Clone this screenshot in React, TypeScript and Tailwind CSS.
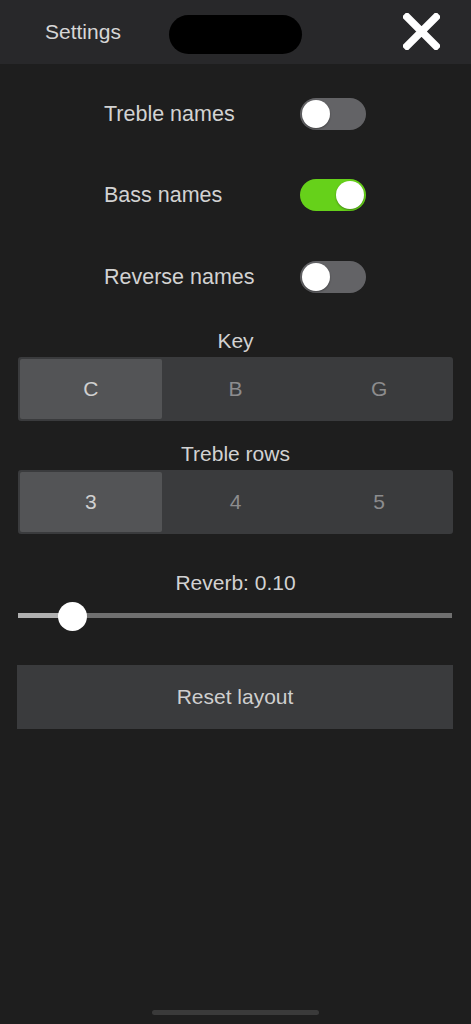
import React from "react";

function Toggle({ on }: { on: boolean }) {
  return (
    <div
      className={`flex h-[32px] w-[66px] items-center rounded-full px-[2px] ${
        on ? "justify-end bg-[#66d11a]" : "justify-start bg-[#636366]"
      }`}
    >
      <div className="h-[28px] w-[28px] rounded-full bg-white shadow-[0_1px_2px_rgba(0,0,0,0.35)]" />
    </div>
  );
}

function Row({ label, on }: { label: string; on: boolean }) {
  return (
    <div className="flex h-[81.5px] items-center pl-[104px]">
      <div className="w-[196px] text-[21.5px] text-[#d2d2d2]">{label}</div>
      <Toggle on={on} />
    </div>
  );
}

function Segmented({ title, items }: { title: string; items: string[] }) {
  return (
    <div className="flex flex-col">
      <div className="h-[24px] text-center text-[21px] leading-[24px] text-[#d2d2d2]">{title}</div>
      <div className="ml-[18px] mr-[18px] mt-[4px] grid h-[64px] grid-cols-3 rounded-[3px] bg-[#3a3b3d] p-[2px]">
        {items.map((it, i) => (
          <div
            key={it}
            className={`flex items-center justify-center rounded-[2px] text-[21px] ${
              i === 0 ? "mr-[2px] bg-[#535456] text-[#d0d0d0]" : "text-[#8c8c8e]"
            }`}
          >
            {it}
          </div>
        ))}
      </div>
    </div>
  );
}

export default function App() {
  return (
    <div
      className="relative flex min-h-[1024px] w-[471px] flex-col bg-[#1e1e1e]"
      style={{ fontFamily: '"Liberation Sans", Arial, sans-serif' }}
    >
      <div className="relative flex h-[64px] items-center justify-between bg-[#28282a] pl-[45px] pr-[31px]">
        <span className="text-[21px] text-[#d6d6d6]">Settings</span>
        <div className="absolute left-[169px] top-[15px] h-[39px] w-[133px] rounded-full bg-black" />
        <svg width="37" height="37" viewBox="0 0 37 37" className="mt-[-2px]">
          <path d="M4 4 L33 33 M33 4 L4 33" stroke="#ffffff" strokeWidth="7.5" strokeLinecap="square" />
        </svg>
      </div>

      <div className="pt-[9px]">
        <Row label="Treble names" on={false} />
        <Row label="Bass names" on={true} />
        <Row label="Reverse names" on={false} />
      </div>

      <div className="mt-[11px]">
        <Segmented title="Key" items={["C", "B", "G"]} />
      </div>
      <div className="mt-[21px]">
        <Segmented title="Treble rows" items={["3", "4", "5"]} />
      </div>

      <div className="mt-[37px] h-[24px] text-center text-[21px] leading-[24px] text-[#d2d2d2]">Reverb: 0.10</div>
      <div className="relative ml-[18px] mr-[19px] mt-[6px] flex h-[30px] items-center">
        <div className="h-[5px] w-[54px] bg-[#b0b0b0]" />
        <div className="h-[5px] flex-1 bg-[#707070]" />
        <div className="absolute left-[40px] top-[1px] h-[29px] w-[29px] rounded-full bg-white" />
      </div>

      <button className="ml-[17px] mr-[18px] mt-[34px] flex h-[64px] items-center justify-center bg-[#3a3b3d] text-[21px] text-[#cfcfcf]">
        Reset layout
      </button>

      <div className="mt-auto mb-[9px] flex justify-center">
        <div className="h-[5px] w-[167px] rounded-full bg-[#3a3a3a]" />
      </div>
    </div>
  );
}
